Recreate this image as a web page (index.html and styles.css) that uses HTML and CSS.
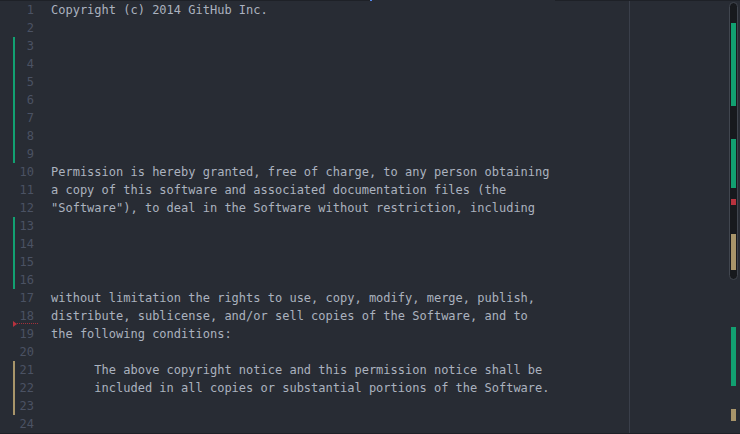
FILE: index.html
```html
<!DOCTYPE html>
<html>
<head>
<meta charset="utf-8">
<link rel="stylesheet" href="styles.css">
</head>
<body>
<div class="topbar"><span class="tb-dark tb-left"></span><span class="tb-blue"></span><span class="tb-gap"></span><span class="tb-dark tb-right"></span></div>
<div class="editor">
  <div class="gutter">
    <div class="gl"><span class="mk"></span><span class="ln">1</span></div>
    <div class="gl"><span class="mk"></span><span class="ln">2</span></div>
    <div class="gl"><span class="mk add"></span><span class="ln">3</span></div>
    <div class="gl"><span class="mk add"></span><span class="ln">4</span></div>
    <div class="gl"><span class="mk add"></span><span class="ln">5</span></div>
    <div class="gl"><span class="mk add"></span><span class="ln">6</span></div>
    <div class="gl"><span class="mk add"></span><span class="ln">7</span></div>
    <div class="gl"><span class="mk add"></span><span class="ln">8</span></div>
    <div class="gl"><span class="mk add"></span><span class="ln">9</span></div>
    <div class="gl"><span class="mk"></span><span class="ln">10</span></div>
    <div class="gl"><span class="mk"></span><span class="ln">11</span></div>
    <div class="gl"><span class="mk"></span><span class="ln">12</span></div>
    <div class="gl"><span class="mk add"></span><span class="ln">13</span></div>
    <div class="gl"><span class="mk add"></span><span class="ln">14</span></div>
    <div class="gl"><span class="mk add"></span><span class="ln">15</span></div>
    <div class="gl"><span class="mk add"></span><span class="ln">16</span></div>
    <div class="gl"><span class="mk"></span><span class="ln">17</span></div>
    <div class="gl del"><span class="mk"></span><span class="ln">18</span></div>
    <div class="gl"><span class="mk"></span><span class="ln">19</span></div>
    <div class="gl"><span class="mk"></span><span class="ln">20</span></div>
    <div class="gl"><span class="mk mod"></span><span class="ln">21</span></div>
    <div class="gl"><span class="mk mod"></span><span class="ln">22</span></div>
    <div class="gl"><span class="mk mod"></span><span class="ln">23</span></div>
    <div class="gl"><span class="mk"></span><span class="ln">24</span></div>
  </div>
  <div class="code">
    <div class="line">Copyright (c) 2014 GitHub Inc.</div>
    <div class="line"> </div>
    <div class="line"> </div>
    <div class="line"> </div>
    <div class="line"> </div>
    <div class="line"> </div>
    <div class="line"> </div>
    <div class="line"> </div>
    <div class="line"> </div>
    <div class="line">Permission is hereby granted, free of charge, to any person obtaining</div>
    <div class="line">a copy of this software and associated documentation files (the</div>
    <div class="line">"Software"), to deal in the Software without restriction, including</div>
    <div class="line"> </div>
    <div class="line"> </div>
    <div class="line"> </div>
    <div class="line"> </div>
    <div class="line">without limitation the rights to use, copy, modify, merge, publish,</div>
    <div class="line">distribute, sublicense, and/or sell copies of the Software, and to</div>
    <div class="line">the following conditions:</div>
    <div class="line"> </div>
    <div class="line">      The above copyright notice and this permission notice shall be</div>
    <div class="line">      included in all copies or substantial portions of the Software.</div>
    <div class="line"> </div>
    <div class="line"> </div>
  </div>
  <div class="wrap-guide"></div>
  <div class="track"></div>
  <div class="markers">
    <span class="sm add" style="top:23px;height:83px"></span>
    <span class="sm add" style="top:139px;height:49px"></span>
    <span class="sm del" style="top:199px;height:6px"></span>
    <span class="sm mod" style="top:234px;height:36px"></span>
    <span class="sm add" style="top:327px;height:59px"></span>
    <span class="sm mod" style="top:409px;height:12px"></span>
  </div>
</div>
</body>
</html>
```

FILE: styles.css
```css
html, body {
  margin: 0;
  padding: 0;
  background: #282c34;
  width: 740px;
  height: 434px;
  overflow: hidden;
}

.topbar {
  display: flex;
  height: 1px;
}
.tb-dark { background: #1e2127; height: 1px; }
.tb-left { width: 370px; }
.tb-blue { width: 2px; background: #568af2; }
.tb-gap { width: 183px; }
.tb-right { flex: 1; }

.editor {
  position: relative;
  display: flex;
  height: 432px;
  border-bottom: 1px solid #1e2127;
  font-family: "DejaVu Sans Mono", monospace;
  font-size: 12px;
  line-height: 18px;
}

.gutter {
  width: 41px;
  flex: none;
}
.gl {
  position: relative;
  display: flex;
  height: 18px;
}
.mk {
  width: 2px;
  margin-left: 13px;
  flex: none;
}
.mk.add { background: #12a071; }
.mk.mod { background: #a8956a; }
.ln {
  flex: 1;
  text-align: right;
  padding-right: 7px;
  color: #4b5263;
}
.gl.del::before {
  content: "";
  position: absolute;
  left: 13px;
  bottom: -2px;
  width: 0;
  height: 0;
  border-top: 3px solid transparent;
  border-bottom: 3px solid transparent;
  border-left: 4px solid #b8323e;
}
.gl.del::after {
  content: "";
  position: absolute;
  left: 17px;
  right: 3px;
  bottom: 1px;
  border-top: 1px dotted #a3303a;
}

.code {
  flex: 1;
  padding-left: 10px;
  color: #abb2bf;
}
.line {
  height: 18px;
  white-space: pre;
}

.wrap-guide {
  position: absolute;
  left: 629px;
  top: 0;
  bottom: 0;
  width: 1px;
  background: #3a3f4a;
}

.track {
  position: absolute;
  left: 729px;
  top: 1px;
  width: 7px;
  height: 276px;
  background: #17191d;
  border: 1px solid #41464f;
  border-radius: 5px;
}

.markers {
  position: absolute;
  left: 731px;
  top: -1px;
  width: 5px;
  height: 434px;
}
.sm {
  position: absolute;
  left: 0;
  width: 5px;
}
.sm.add { background: #12a071; }
.sm.mod { background: #a8956a; }
.sm.del { background: #b8323e; }
```
